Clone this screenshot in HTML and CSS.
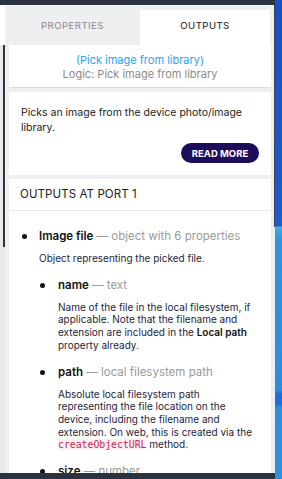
FILE: index.html
```html
<!DOCTYPE html>
<html>
<head>
    <meta charset="UTF-8">
    <title>Pick image from library</title>
    <link rel="stylesheet" href="styles.css">
</head>
<body>
<div class="screen">
    <div class="window">
        <div class="topbar"></div>
        <div class="middle">
            <div class="side"></div>
            <div class="panel">
                <!-- tabs -->
                <div class="tabs">
                    <div class="tab">PROPERTIES</div>
                    <div class="tab active">OUTPUTS</div>
                </div>

                <div class="card logic">
                    <div class="link">(Pick image from library)</div>
                    <div class="sub">Logic: Pick image from library</div>
                </div>

                <div class="card info">
                    <p>Picks an image from the device photo/image library.</p>
                    <div class="actions">
                        <button class="more">READ MORE</button>
                    </div>
                </div>

                <div class="card outputs">
                    <div class="heading">OUTPUTS AT PORT 1</div>
                    <ul class="props">
                        <li>
                            <div class="prop">
                                <div class="title"><b>Image file</b> <span>&mdash; object with 6 properties</span></div>
                                <div class="desc">Object representing the picked file.</div>
                                <ul class="props sub-props">
                                    <li>
                                        <div class="prop">
                                            <div class="title"><b>name</b> <span>&mdash; text</span></div>
                                            <div class="desc">Name of the file in the local filesystem, if applicable. Note that the filename and extension are included in the <b>Local path</b> property already.</div>
                                        </div>
                                    </li>
                                    <li>
                                        <div class="prop">
                                            <div class="title"><b>path</b> <span>&mdash; local filesystem path</span></div>
                                            <div class="desc">Absolute local filesystem path representing the file location on the device, including the filename and extension. On web, this is created via the <code>createObjectURL</code> method.</div>
                                        </div>
                                    </li>
                                    <li>
                                        <div class="prop">
                                            <div class="title"><b>size</b> <span>&mdash; number</span></div>
                                        </div>
                                    </li>
                                </ul>
                            </div>
                        </li>
                    </ul>
                </div>
            </div>
        </div>
        <div class="bottombar"></div>
    </div>
    <div class="desktop"></div>
</div>
</body>
</html>
```

FILE: styles.css
```css
body {
    margin: 0;
    font-family: Inter, "Open Sans", sans-serif;
    color: #222;
}

.screen {
    display: flex;
    width: 282px;
    height: 479px;
    overflow: hidden;
}

.window {
    width: 275px;
    display: flex;
    flex-direction: column;
}

.topbar {
    height: 5px;
    background: #2c3340;
}

.bottombar {
    height: 6px;
    background: #2c3340;
}

.middle {
    flex: 1;
    min-height: 0;
    display: flex;
}

.side {
    width: 5px;
    background:
        linear-gradient(#fff, #fff) left top / 100% 40px no-repeat,
        linear-gradient(#2d3441, #2d3441) right 40px / 2px 202px no-repeat,
        #e7e8eb;
}

.panel {
    width: 270px;
    display: flex;
    flex-direction: column;
    overflow: hidden;
    background:
        linear-gradient(#3a4150, #3a4150) right top / 1px 222px no-repeat,
        #eeeff1;
}

.desktop {
    width: 7px;
    background: linear-gradient(to bottom, #1450c6 0, #1a5ed0 226px, #3cb0ec 227px, #2a94e2 240px, #2a8ee0 390px, #1c6fdc 394px, #1c6fdc 404px, #2a90e2 408px, #2b92e2 100%);
}

/* tabs */
.tabs {
    display: flex;
    height: 40px;
    flex: none;
}

.tab {
    width: 135px;
    text-align: center;
    font-size: 9.6px;
    letter-spacing: .45px;
    color: #8a8a8a;
    line-height: 42px;
}

.tab.active {
    width: 130px;
    margin-top: 5px;
    line-height: 32px;
    background: #fff;
    color: #111;
}

.card {
    margin: 0 4px 4px 4px;
    background: #fff;
    flex: none;
}

.logic {
    height: 43px;
    padding-top: 8px;
    box-sizing: border-box;
    text-align: center;
    font-size: 11px;
    line-height: 14px;
    border-bottom: 1px solid #dadbdd;
}

.logic .link {
    color: #2ea2ee;
}

.logic .sub {
    color: #8c8c8c;
}

.info {
    padding: 13px 12px 12px 12px;
}

.info p {
    margin: 0;
    font-size: 10.5px;
    line-height: 15px;
}

.actions {
    display: flex;
    justify-content: flex-end;
    margin-top: 8px;
}

.more {
    height: 20px;
    width: 78px;
    padding: 0;
    border: 0;
    border-radius: 10px;
    background: #1f0d5c;
    color: #fff;
    font-family: Inter, sans-serif;
    font-weight: bold;
    font-size: 9.5px;
}

.outputs {
    flex: 1;
    margin-bottom: 0;
}

.heading {
    height: 31px;
    line-height: 31px;
    padding: 0 11px;
    font-size: 11.5px;
    letter-spacing: .1px;
    border-bottom: 1px solid #e9ebee;
}

.props {
    list-style: none;
    margin: 0;
    padding: 17px 16px 0 13px;
}

.props li {
    display: flex;
}

.props li::before {
    content: "";
    flex: none;
    width: 5px;
    height: 5px;
    border-radius: 50%;
    background: #111;
    margin: 6px 12px 0 0;
}

.sub-props {
    padding: 0 0 0 1px;
}

.sub-props li::before {
    margin-right: 13px;
}

.prop {
    flex: 1;
}

.title {
    font-size: 11.5px;
    line-height: 16px;
}

.title b {
    font-weight: 600;
    color: #111;
}

.title span {
    color: #9a9a9a;
}

.desc {
    margin: 8px 0 12px 0;
    font-size: 10px;
    line-height: 12.7px;
    color: #24243a;
}

.desc b {
    font-weight: 600;
    color: #111;
}

code {
    font-family: "DejaVu Sans Mono", monospace;
    font-size: 9.8px;
    line-height: 12px;
    color: #c7254e;
    background: #f8f1f4;
    border-radius: 2px;
}
```
